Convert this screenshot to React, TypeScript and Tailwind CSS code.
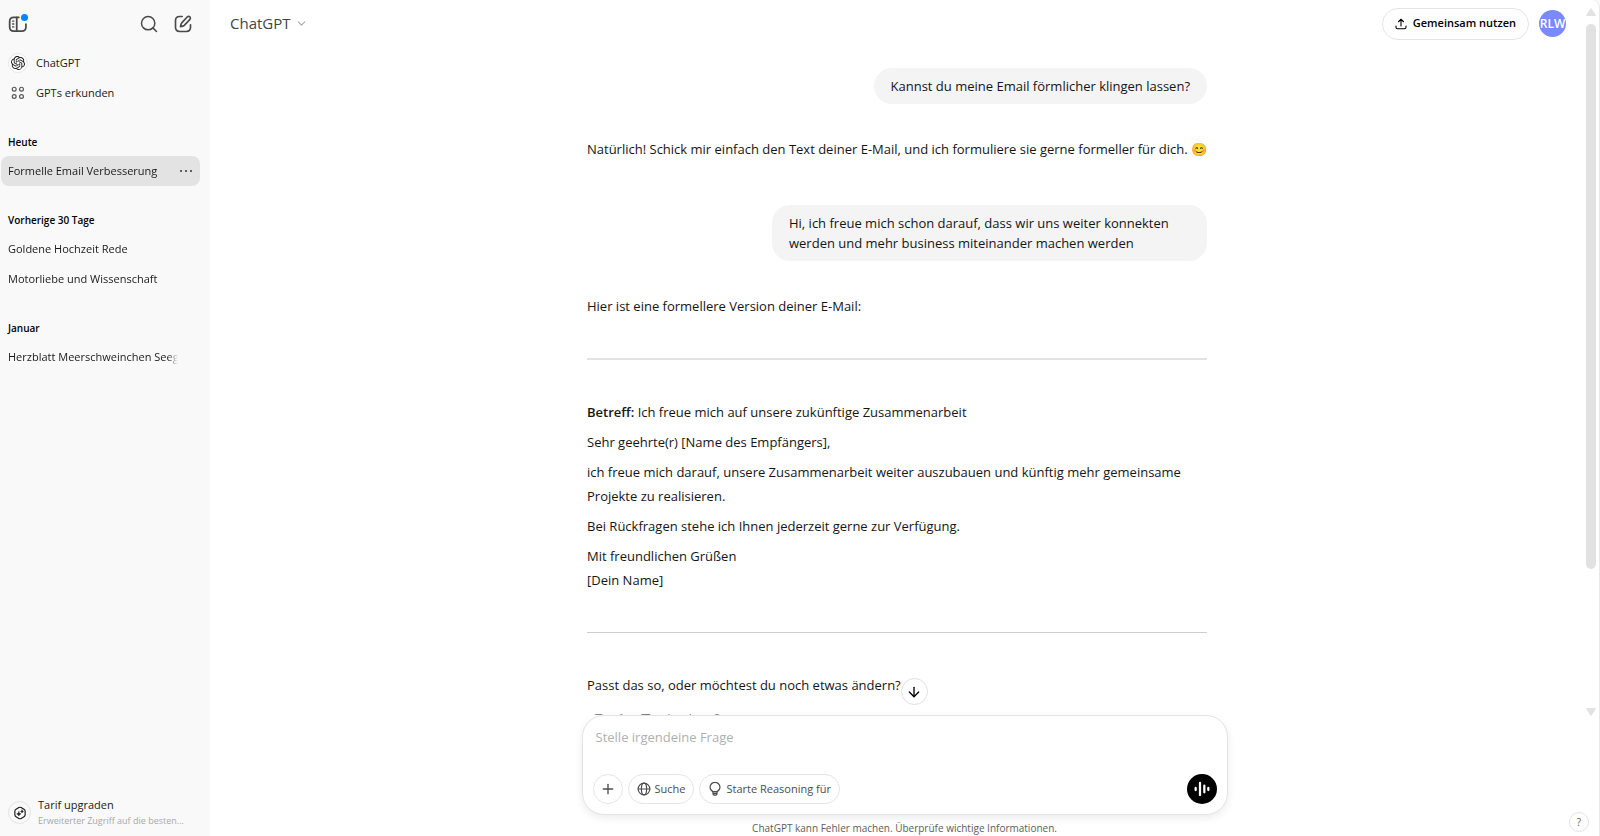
import React from "react";
import { ArrowDown, ChevronDown, Plus, Search } from "lucide-react";
import { SiOpenai } from "react-icons/si";

const icon = {
  viewBox: "0 0 24 24",
  fill: "none",
  stroke: "currentColor",
  strokeLinecap: "round" as const,
  strokeLinejoin: "round" as const,
  "aria-hidden": true,
};

function SidebarIcon() {
  return (
    <svg {...icon} strokeWidth={2.1} className="size-5">
      <path d="M13 4H7C3.500 4 2 5.500 2 9v6.500C2 19 3.500 20.500 7 20.500h9.500c3.500 0 5-1.500 5-5V12" />
      <path d="M10.500 4v16.500" />
      <path d="M5.500 8.500h1.500M5.500 12h1.500M5.500 15.500h1.500" strokeWidth={1.6} />
    </svg>
  );
}

function ComposeIcon() {
  return (
    <svg {...icon} strokeWidth={2} className="size-5">
      <path d="M11 3H8C4.500 3 3 4.500 3 8v8c0 3.500 1.500 5 5 5h8c3.500 0 5-1.500 5-5v-3" />
      <path d="M17 3.600c1-1 2.300-1 3.200-.1s.9 2.200-.1 3.200l-6.600 6.900c-.8.800-1.800 1.200-4.500 1.500.3-2.700.7-3.700 1.500-4.500z" />
    </svg>
  );
}

function GridIcon() {
  return (
    <svg {...icon} strokeWidth={2} className="size-[14px]">
      <circle cx="5.500" cy="5.500" r="3.300" />
      <circle cx="18" cy="5.500" r="3.300" />
      <circle cx="5.500" cy="18" r="3.300" />
      <circle cx="18" cy="18" r="3.300" />
    </svg>
  );
}

function UpgradeIcon() {
  return (
    <svg {...icon} strokeWidth={2} className="size-[14px]">
      <path d="M10 2.700a4 4 0 0 1 4 0l4.800 2.800a4 4 0 0 1 2 3.400v6.200a4 4 0 0 1-2 3.400L14 21.300a4 4 0 0 1-4 0l-4.800-2.800a4 4 0 0 1-2-3.400V8.900a4 4 0 0 1 2-3.400z" />
      <path d="M10 10c.4 2.400 1.300 3.200 3.600 3.600-2.300.4-3.200 1.300-3.600 3.600-.4-2.300-1.300-3.200-3.600-3.600C8.700 13.200 9.600 12.400 10 10zM15.500 7c.3 1.600.9 2.200 2.400 2.400-1.500.3-2.100.9-2.400 2.400-.3-1.500-.9-2.100-2.400-2.400 1.500-.2 2.100-.8 2.400-2.400z" fill="currentColor" strokeWidth={1} />
    </svg>
  );
}

function ShareIcon() {
  return (
    <svg {...icon} strokeWidth={2.2} className="size-3">
      <path d="M12 16V3M7 7.500L12 2.500l5 5M2 16v2.500C2 20.500 3 21.500 5 21.500h14c2 0 3-1 3-3V16" />
    </svg>
  );
}

function GlobeIcon() {
  return (
    <svg {...icon} strokeWidth={2} className="size-[14px]">
      <circle cx="12" cy="12" r="10" />
      <ellipse cx="12" cy="12" rx="4.500" ry="10" />
      <path d="M2 12h20" />
    </svg>
  );
}

function BulbIcon() {
  return (
    <svg {...icon} strokeWidth={2} className="size-[14px]">
      <path d="M8.500 16.500C5.500 15 3.500 12.500 3.500 9a8.500 8.500 0 0 1 17 0c0 3.500-2 6-5 7.500" />
      <path d="M8.500 16.500h7v3c0 2-1.500 3-3.500 3s-3.500-1-3.500-3zM8.500 19.500h7" />
    </svg>
  );
}

function CopyIcon() {
  return (
    <svg {...icon} strokeWidth={2} className="size-4">
      <path d="M8 8V6c0-2 1-3 3-3h7c2 0 3 1 3 3v7c0 2-1 3-3 3h-2" />
      <rect x="3" y="8" width="13" height="13" rx="3" />
    </svg>
  );
}

function ThumbUpIcon() {
  return (
    <svg {...icon} strokeWidth={2} className="size-4">
      <path d="M12 3c2 0 3 1 2.500 3L14 9h4c2 0 3 1.500 2.500 3l-1.500 6c-.5 2-1.500 3-3.500 3H5V11h3z" />
    </svg>
  );
}

function ThumbDownIcon() {
  return (
    <svg {...icon} strokeWidth={2} className="size-4">
      <path d="M19 13h-3l-4 8c-2 0-3-1-2.500-3l.5-3H6c-2 0-3-1.500-2.500-3L5 6c.5-2 1.500-3 3.500-3H19zM15 3v10" />
    </svg>
  );
}

function SpeakerIcon() {
  return (
    <svg {...icon} strokeWidth={2} className="size-4">
      <path d="M12 3L7 8H3v8h4l5 5zM16 9c1.500 2 1.500 4 0 6M19 6c3 4 3 8 0 12" />
    </svg>
  );
}

function CanvasIcon() {
  return (
    <svg {...icon} strokeWidth={2} className="size-4">
      <path d="M4 17L15 5c2-2 5 1 3 3L7 20c-3 2-5-1-3-3zM8 3v4M6 5h4M20 14v4M18 16h4" />
    </svg>
  );
}

function RetryIcon() {
  return (
    <svg {...icon} strokeWidth={2} className="size-4">
      <path d="M4 9c2-4 5-6 8-6 4 0 6 2 8 5M20 5v3h-5M20 15c-2 4-5 6-8 6-4 0-6-2-8-5M4 21v-5h5" />
    </svg>
  );
}

function VoiceIcon() {
  return (
    <svg {...icon} strokeWidth={3.4} className="size-4">
      <path d="M2.500 10.500v3M9 3v18M15.500 7v10M21.500 10.500v3" />
    </svg>
  );
}

function HistoryGroup({ title, children }: { title: string; children: React.ReactNode }) {
  return (
    <section className="mb-[22px]">
      <h2 className="px-[7px] py-1 text-[10px] leading-4 font-semibold text-black">{title}</h2>
      <ul className="pt-[2px]">{children}</ul>
    </section>
  );
}

function HistoryItem({ title, active = false }: { title: string; active?: boolean }) {
  return (
    <li className={active ? "flex h-[30px] items-center rounded-lg bg-[#e3e3e3] pr-2 pl-[7px]" : "flex h-[30px] items-center pr-[22px] pl-[7px]"}>
      <a href="#" className="min-w-0 grow overflow-hidden mask-r-from-94% whitespace-nowrap">
        {title}
      </a>
      {active && (
        <button type="button" aria-label="Optionen" className="flex w-3 items-center justify-between">
          <span className="size-[2px] rounded-full bg-[#333]" />
          <span className="size-[2px] rounded-full bg-[#333]" />
          <span className="size-[2px] rounded-full bg-[#333]" />
        </button>
      )}
    </li>
  );
}

function Sidebar() {
  return (
    <aside className="flex w-[210px] shrink-0 flex-col bg-[#f9f9f9] text-[11px] leading-5 text-[#1a1a1a]">
      <div className="flex h-12 items-center pr-[17px] pl-2 text-[#4a4a4a]">
        <button type="button" aria-label="Seitenleiste schließen" className="relative">
          <SidebarIcon />
          <span className="absolute top-0 left-[13px] size-[7px] rounded-full bg-[#0285ff]" />
        </button>
        <button type="button" aria-label="Chats durchsuchen" className="ml-auto">
          <Search className="size-5" strokeWidth={1.8} />
        </button>
        <button type="button" aria-label="Neuer Chat" className="ml-[14px]">
          <ComposeIcon />
        </button>
      </div>
      <nav className="px-2">
        <a href="#" className="flex h-[30px] items-center gap-2">
          <span className="flex size-5 items-center justify-center rounded-full border border-[#e8e8e8] bg-white">
            <SiOpenai className="size-[14px]" />
          </span>
          ChatGPT
        </a>
        <a href="#" className="flex h-[30px] items-center gap-2">
          <span className="flex size-5 items-center justify-center text-[#555]">
            <GridIcon />
          </span>
          GPTs erkunden
        </a>
      </nav>
      <div className="mt-[22px] pr-[10px] pl-[1px]">
        <HistoryGroup title="Heute">
          <HistoryItem title="Formelle Email Verbesserung" active />
        </HistoryGroup>
        <HistoryGroup title="Vorherige 30 Tage">
          <HistoryItem title="Goldene Hochzeit Rede" />
          <HistoryItem title="Motorliebe und Wissenschaft" />
        </HistoryGroup>
        <HistoryGroup title="Januar">
          <HistoryItem title="Herzblatt Meerschweinchen Seegurke" />
        </HistoryGroup>
      </div>
      <a href="#" className="mt-auto mb-2 flex items-center gap-[7px] pr-4 pl-2">
        <span className="flex size-[23px] shrink-0 items-center justify-center rounded-full border border-[#e3e3e3]">
          <UpgradeIcon />
        </span>
        <span className="flex min-w-0 flex-col">
          <span className="leading-4">Tarif upgraden</span>
          <span className="truncate text-[9px] leading-[15px] text-[#a8a8a8]">Erweiterter Zugriff auf die besten...</span>
        </span>
      </a>
    </aside>
  );
}

function UserMessage({ children }: { children: React.ReactNode }) {
  return <div className="max-w-[435px] self-end rounded-[18px] bg-[#f4f4f4] px-[17px] py-2 leading-5">{children}</div>;
}

function Composer() {
  return (
    <form className="flex h-[100px] flex-col justify-between rounded-[22px] border border-[#e4e4e4] bg-white px-[10px] pt-[9px] pb-[10px] shadow-[0_3px_8px_rgba(0,0,0,0.08)]">
      <input
        type="text"
        aria-label="Nachricht"
        placeholder="Stelle irgendeine Frage"
        className="px-[3px] text-[13px] leading-6 outline-none placeholder:text-[#b0b0b0]"
      />
      <div className="flex items-center gap-[5px] text-[11px] leading-4 font-medium text-[#4d4d4d]">
        <button type="button" aria-label="Datei hinzufügen" className="flex size-[30px] items-center justify-center rounded-full border border-[#e5e5e5]">
          <Plus className="size-4" strokeWidth={2} />
        </button>
        <button type="button" className="flex h-[30px] items-center gap-1 rounded-full border border-[#e5e5e5] px-2">
          <GlobeIcon />
          Suche
        </button>
        <button type="button" className="flex h-[30px] items-center gap-1 rounded-full border border-[#e5e5e5] px-2">
          <BulbIcon />
          Starte Reasoning für
        </button>
        <button type="button" aria-label="Sprachmodus" className="ml-auto flex size-[30px] items-center justify-center rounded-full bg-black text-white">
          <VoiceIcon />
        </button>
      </div>
    </form>
  );
}

export default function App() {
  return (
    <div className="flex h-screen overflow-hidden bg-[#f9f9f9] font-['Open_Sans',sans-serif] text-[13px] text-[#151515]">
      <Sidebar />
      <main className="relative flex min-w-0 grow flex-col rounded-tr-lg border-r border-[#e8e8e8] bg-white">
        <header className="flex h-[47px] shrink-0 items-center pr-[33px] pl-5">
          <button type="button" className="flex items-center gap-1 text-[15px] text-[#444]">
            ChatGPT
            <ChevronDown className="size-[13px] text-[#aaa]" />
          </button>
          <button type="button" className="ml-auto flex h-8 items-center gap-[6px] rounded-full border border-[#e5e5e5] px-3 text-[11px] font-semibold text-black">
            <ShareIcon />
            Gemeinsam nutzen
          </button>
          <button type="button" aria-label="Profil" className="ml-[10px] flex size-[27px] items-center justify-center overflow-hidden rounded-full bg-[#7989ff] text-[12px] font-semibold text-white">
            RLW
          </button>
        </header>
        <div className="min-h-0 grow overflow-hidden pr-[15px]">
          <div className="mx-auto flex w-[620px] max-w-full flex-col pt-[21px] leading-6">
            <UserMessage>Kannst du meine Email förmlicher klingen lassen?</UserMessage>
            <p className="mt-[33px]">
              Natürlich! Schick mir einfach den Text deiner E-Mail, und ich formuliere sie gerne formeller für dich. 😊
            </p>
            <div className="mt-11 flex flex-col">
              <UserMessage>Hi, ich freue mich schon darauf, dass wir uns weiter konnekten werden und mehr business miteinander machen werden</UserMessage>
            </div>
            <p className="mt-[33px]">Hier ist eine formellere Version deiner E-Mail:</p>
            <hr className="my-10 border-t-2 border-[#e3e3e3]" />
            <div className="flex flex-col gap-[6px]">
              <p><strong className="font-semibold">Betreff:</strong> Ich freue mich auf unsere zukünftige Zusammenarbeit</p>
              <p>Sehr geehrte(r) [Name des Empfängers],</p>
              <p>ich freue mich darauf, unsere Zusammenarbeit weiter auszubauen und künftig mehr gemeinsame Projekte zu realisieren.</p>
              <p>Bei Rückfragen stehe ich Ihnen jederzeit gerne zur Verfügung.</p>
              <p>Mit freundlichen Grüßen<br />[Dein Name]</p>
            </div>
            <hr className="my-10 border-[#cdcdcd]" />
            <p>Passt das so, oder möchtest du noch etwas ändern?</p>
            <div className="mt-4 flex gap-2 pl-[2px] text-[#5d5d5d]">
              <CopyIcon />
              <ThumbUpIcon />
              <ThumbDownIcon />
              <SpeakerIcon />
              <CanvasIcon />
              <RetryIcon />
            </div>
          </div>
        </div>
        <footer className="relative shrink-0">
          <button type="button" aria-label="Nach unten" className="absolute -top-[37px] left-1/2 -ml-1 flex size-[27px] items-center justify-center rounded-full border border-[#e0e0e0] bg-white text-black">
            <ArrowDown className="size-4" />
          </button>
          <div className="mx-auto w-[646px] max-w-full">
            <Composer />
            <p className="pt-[5px] text-center text-[10px] leading-4 text-[#5d5d5d]">ChatGPT kann Fehler machen. Überprüfe wichtige Informationen.</p>
          </div>
          <button type="button" aria-label="Hilfe" className="absolute right-[10px] bottom-1 flex size-5 items-center justify-center rounded-full border border-[#e3e3e3] text-[10px] text-[#5d5d5d]">?</button>
        </footer>
        <div aria-hidden="true" className="absolute top-2 right-[3px] bottom-[120px] flex w-[10px] flex-col items-center text-[#e2e2e2]">
          <svg viewBox="0 0 10 8" className="h-2 w-[10px]"><path d="M5 0.500L9.500 7.500H0.500z" fill="currentColor" stroke="currentColor" strokeLinejoin="round" /></svg>
          <div className="mt-2 h-[545px] w-[10px] rounded-full bg-[#e2e2e2]" />
          <svg viewBox="0 0 10 8" className="mt-auto h-2 w-[10px]"><path d="M5 7.500L9.500 0.500H0.500z" fill="currentColor" stroke="currentColor" strokeLinejoin="round" /></svg>
        </div>
      </main>
    </div>
  );
}
